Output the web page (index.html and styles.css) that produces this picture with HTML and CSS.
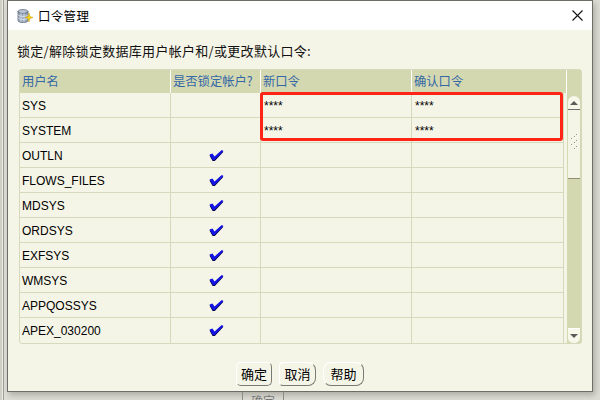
FILE: index.html
```html
<!DOCTYPE html>
<html lang="zh-CN">
<head>
<meta charset="utf-8">
<title>口令管理</title>
<link rel="stylesheet" href="styles.css">
</head>
<body>
<div class="screen">
  <div class="dialog">
    <div class="titlebar">
      <svg class="app-icon" width="16" height="16" viewBox="0 0 16 16">
        <ellipse cx="6" cy="3.5" rx="5" ry="2" fill="#b8c4d4" stroke="#6a7688" stroke-width="0.8"/>
        <path d="M1 3.5 V12.5 A5 2 0 0 0 11 12.5 V3.5 A5 2 0 0 1 1 3.5 Z" fill="#9aa8bc" stroke="#5c6678" stroke-width="0.8"/>
        <path d="M1 6.5 A5 2 0 0 0 11 6.5 M1 9.5 A5 2 0 0 0 11 9.5" fill="none" stroke="#dfe6ee" stroke-width="0.8"/>
        <path d="M4 4 V14 M7 4.5 V14.5" stroke="#dfe6ee" stroke-width="0.7"/>
        <path d="M12 5 L13 8.5 L16 9.5 L13 10.5 L12 14 L11 10.5 L8 9.5 L11 8.5 Z" fill="#f4d21a" stroke="#c89a00" stroke-width="0.5"/>
      </svg>
      <span class="title">口令管理</span>
      <svg class="close" width="11" height="11" viewBox="0 0 11 11">
        <path d="M0.5 0.5 L10.5 10.5 M10.5 0.5 L0.5 10.5" stroke="#111" stroke-width="1.1"/>
      </svg>
    </div>
    <div class="content">
      <div class="prompt">锁定/解除锁定数据库用户帐户和/或更改默认口令:</div>
      <div class="grid">
        <div class="hcell">用户名</div>
        <div class="hcell">是否锁定帐户?</div>
        <div class="hcell">新口令</div>
        <div class="hcell hlast">确认口令</div>
        <div class="hcell hscroll"></div>

        <div class="cell">SYS</div><div class="cell"></div><div class="cell pw">****</div><div class="cell c4 pw">****</div><div class="gap"></div>
        <div class="cell">SYSTEM</div><div class="cell"></div><div class="cell pw">****</div><div class="cell c4 pw">****</div><div class="gap"></div>
        <div class="cell">OUTLN</div><div class="cell chk"><svg class="tick" width="15" height="12" viewBox="0 0 15 12"><path d="M0.5 5.5 L3.5 4.5 L5.5 7.5 L12.5 0.8 L14.2 2 L5.8 11 L3.6 11 Z" fill="#00004a"/><path d="M0.5 4.5 L3.5 3.5 L5.5 6.5 L12.8 0 L14.5 1 L5.6 10 L3.8 10 Z" fill="#1414e6"/></svg></div><div class="cell"></div><div class="cell c4"></div><div class="gap"></div>
        <div class="cell">FLOWS_FILES</div><div class="cell chk"><svg class="tick" width="15" height="12" viewBox="0 0 15 12"><path d="M0.5 5.5 L3.5 4.5 L5.5 7.5 L12.5 0.8 L14.2 2 L5.8 11 L3.6 11 Z" fill="#00004a"/><path d="M0.5 4.5 L3.5 3.5 L5.5 6.5 L12.8 0 L14.5 1 L5.6 10 L3.8 10 Z" fill="#1414e6"/></svg></div><div class="cell"></div><div class="cell c4"></div><div class="gap"></div>
        <div class="cell">MDSYS</div><div class="cell chk"><svg class="tick" width="15" height="12" viewBox="0 0 15 12"><path d="M0.5 5.5 L3.5 4.5 L5.5 7.5 L12.5 0.8 L14.2 2 L5.8 11 L3.6 11 Z" fill="#00004a"/><path d="M0.5 4.5 L3.5 3.5 L5.5 6.5 L12.8 0 L14.5 1 L5.6 10 L3.8 10 Z" fill="#1414e6"/></svg></div><div class="cell"></div><div class="cell c4"></div><div class="gap"></div>
        <div class="cell">ORDSYS</div><div class="cell chk"><svg class="tick" width="15" height="12" viewBox="0 0 15 12"><path d="M0.5 5.5 L3.5 4.5 L5.5 7.5 L12.5 0.8 L14.2 2 L5.8 11 L3.6 11 Z" fill="#00004a"/><path d="M0.5 4.5 L3.5 3.5 L5.5 6.5 L12.8 0 L14.5 1 L5.6 10 L3.8 10 Z" fill="#1414e6"/></svg></div><div class="cell"></div><div class="cell c4"></div><div class="gap"></div>
        <div class="cell">EXFSYS</div><div class="cell chk"><svg class="tick" width="15" height="12" viewBox="0 0 15 12"><path d="M0.5 5.5 L3.5 4.5 L5.5 7.5 L12.5 0.8 L14.2 2 L5.8 11 L3.6 11 Z" fill="#00004a"/><path d="M0.5 4.5 L3.5 3.5 L5.5 6.5 L12.8 0 L14.5 1 L5.6 10 L3.8 10 Z" fill="#1414e6"/></svg></div><div class="cell"></div><div class="cell c4"></div><div class="gap"></div>
        <div class="cell">WMSYS</div><div class="cell chk"><svg class="tick" width="15" height="12" viewBox="0 0 15 12"><path d="M0.5 5.5 L3.5 4.5 L5.5 7.5 L12.5 0.8 L14.2 2 L5.8 11 L3.6 11 Z" fill="#00004a"/><path d="M0.5 4.5 L3.5 3.5 L5.5 6.5 L12.8 0 L14.5 1 L5.6 10 L3.8 10 Z" fill="#1414e6"/></svg></div><div class="cell"></div><div class="cell c4"></div><div class="gap"></div>
        <div class="cell">APPQOSSYS</div><div class="cell chk"><svg class="tick" width="15" height="12" viewBox="0 0 15 12"><path d="M0.5 5.5 L3.5 4.5 L5.5 7.5 L12.5 0.8 L14.2 2 L5.8 11 L3.6 11 Z" fill="#00004a"/><path d="M0.5 4.5 L3.5 3.5 L5.5 6.5 L12.8 0 L14.5 1 L5.6 10 L3.8 10 Z" fill="#1414e6"/></svg></div><div class="cell"></div><div class="cell c4"></div><div class="gap"></div>
        <div class="cell last">APEX_030200</div><div class="cell chk last"><svg class="tick" width="15" height="12" viewBox="0 0 15 12"><path d="M0.5 5.5 L3.5 4.5 L5.5 7.5 L12.5 0.8 L14.2 2 L5.8 11 L3.6 11 Z" fill="#00004a"/><path d="M0.5 4.5 L3.5 3.5 L5.5 6.5 L12.8 0 L14.5 1 L5.6 10 L3.8 10 Z" fill="#1414e6"/></svg></div><div class="cell last"></div><div class="cell c4 last"></div><div class="gap"></div>

        <div class="scrollbar">
          <div class="sb-up"><span class="tri-up"></span></div>
          <div class="sb-thumb">
            <svg class="grip" width="8" height="18" viewBox="0 0 8 18">
              <g fill="#9a9a80"><rect x="6" y="0" width="1" height="1"/><rect x="4" y="2" width="1" height="1"/><rect x="1" y="4" width="1" height="1"/><rect x="6" y="6" width="1" height="1"/><rect x="4" y="8" width="1" height="1"/><rect x="1" y="10" width="1" height="1"/><rect x="6" y="12" width="1" height="1"/><rect x="4" y="14" width="1" height="1"/></g>
              <g fill="#ffffff"><rect x="7" y="1" width="1" height="1"/><rect x="5" y="3" width="1" height="1"/><rect x="2" y="5" width="1" height="1"/><rect x="7" y="7" width="1" height="1"/><rect x="5" y="9" width="1" height="1"/><rect x="2" y="11" width="1" height="1"/><rect x="7" y="13" width="1" height="1"/><rect x="5" y="15" width="1" height="1"/></g>
            </svg>
          </div>
          <div class="sb-track"></div>
          <div class="sb-down"><span class="tri-down"></span></div>
        </div>

        <div class="highlight"></div>
      </div>
      <div class="buttons">
        <div class="btn b1">确定</div>
        <div class="btn b2">取消</div>
        <div class="btn b3">帮助</div>
      </div>
    </div>
  </div>
  <div class="behind">
    <div class="ghost-btn">确定</div>
  </div>
</div>
</body>
</html>
```
FILE: styles.css
```css
* { box-sizing: border-box; }
html, body { margin: 0; padding: 0; }
body {
  width: 600px;
  height: 400px;
  overflow: hidden;
  background: #dcdcd4;
  font-family: "Liberation Sans", "Noto Sans CJK SC", sans-serif;
}
.screen {
  width: 600px;
  height: 400px;
  background:
    linear-gradient(to right, #cfcfc6 0, #cfcfc6 2px, #ebebe4 2px, #ebebe4 3px, #9e9e98 3px, #9e9e98 4px, #deded6 4px, #deded6 7px, transparent 7px);
  display: flex;
  flex-direction: column;
}
.dialog {
  margin-left: 7px;
  width: 586px;
  height: 392px;
  border: 1px solid #6e6e68;
  background: #f5f5e7;
  box-shadow: 2px 3px 6px rgba(0,0,0,0.22);
  display: flex;
  flex-direction: column;
  flex: none;
}
.titlebar {
  height: 29px;
  background: #ffffff;
  display: flex;
  align-items: center;
  padding-left: 9px;
  padding-right: 9px;
  flex: none;
}
.app-icon { flex: none; margin-top: 1px; }
.title {
  margin-left: 5px;
  font-family: "Noto Sans CJK SC", sans-serif;
  font-size: 12.5px;
  color: #000;
  letter-spacing: 0.3px;
}
.close { margin-left: auto; margin-right: 0; }
.content {
  flex: 1;
  padding: 13px 0 0 9px;
  display: flex;
  flex-direction: column;
}
.prompt {
  height: 16px;
  line-height: 16px;
  font-family: "Noto Sans CJK SC", sans-serif;
  font-size: 13px;
  letter-spacing: 0.3px;
  color: #111;
}
.grid {
  position: relative;
  margin-top: 10px;
  margin-left: 2px;
  width: 563px;
  border: 1px solid #d6d9bb;
  border-radius: 3px;
  display: grid;
  grid-template-columns: 151px 90px 151px 152px 3px 14px;
  grid-template-rows: 23px repeat(10, 25px);
}
.hcell {
  background: #d3d8b1;
  border-right: 1px solid #ffffff;
  color: #3467a6;
  font-family: "Noto Sans CJK SC", sans-serif;
  font-size: 12.3px;
  line-height: 23px;
  padding-left: 2px;
  white-space: nowrap;
  overflow: hidden;
}
.hlast { grid-column: 4 / span 2; }
.hscroll { border-right: none; }
.cell {
  border-right: 1px solid #d6d9bb;
  border-bottom: 1px solid #d6d9bb;
  font-size: 12px;
  color: #000;
  padding-left: 2px;
  padding-top: 1px;
  line-height: 24px;
  white-space: nowrap;
}
.cell.last { border-bottom: none; }
.pw { padding-left: 3px; font-size: 12px; line-height: 26px; padding-top: 0; }
.chk {
  display: flex;
  align-items: center;
  justify-content: center;
  padding-left: 2px;
  padding-top: 1px;
}
.gap { background: #f5f5e7; }
.scrollbar {
  grid-column: 6;
  grid-row: 2 / span 10;
  background: #d3d8b1;
  padding: 3px 1px 0 1px;
  display: flex;
  flex-direction: column;
}
.sb-up {
  height: 14px;
  background: #f7f7ea;
  border-radius: 6px 6px 0 0;
  border-bottom: 1px solid #6e6e68;
  display: flex;
  justify-content: center;
  align-items: center;
}
.tri-up {
  width: 0; height: 0;
  border-left: 4px solid transparent;
  border-right: 4px solid transparent;
  border-bottom: 4px solid #5c5c58;
}
.sb-thumb {
  height: 69px;
  background: #f5f5e7;
  border-bottom: 1px solid #8f9070;
  display: flex;
  justify-content: center;
  padding-top: 24px;
}
.sb-track { flex: 1; }
.sb-down {
  height: 15px;
  background: #f7f7ea;
  border-top: 1px solid #ffffff;
  border-radius: 0 0 5px 5px;
  display: flex;
  justify-content: center;
  align-items: center;
  margin-bottom: 0;
}
.tri-down {
  width: 0; height: 0;
  border-left: 4px solid transparent;
  border-right: 4px solid transparent;
  border-top: 4px solid #5c5c58;
}
.highlight {
  position: absolute;
  left: 240px;
  top: 22px;
  width: 303px;
  height: 49px;
  border: 3px solid #ff2416;
  border-radius: 3px;
  pointer-events: none;
}
.buttons {
  margin-top: 18px;
  margin-left: -9px;
  display: flex;
  justify-content: center;
  gap: 7px;
}
.btn {
  height: 24px;
  line-height: 22px;
  padding: 0 6px;
  font-family: "Noto Sans CJK SC", sans-serif;
  font-size: 13px;
  color: #000;
  background: #f5f5e7;
  border: 1px solid;
  border-color: #ffffff #7a7a74 #7a7a74 #ffffff;
  border-radius: 5px;
}
.b1 { width: 36px; padding: 0; text-align: center; }
.b2 { width: 37px; padding: 0; text-align: center; border-radius: 4px 8px 8px 4px; }
.b3 { width: 41px; padding: 0; text-align: center; border-radius: 8px; }
.behind {
  flex: 1;
  overflow: hidden;
  padding-left: 242px;
}
.ghost-btn {
  width: 42px;
  height: 8px;
  border: 1px solid #8a8a84;
  border-top: none;
  border-bottom: none;
  text-align: center;
  font-family: "Noto Sans CJK SC", sans-serif;
  font-size: 12px;
  line-height: 16px;
  color: #777;
  overflow: hidden;
  padding-top: 1px;
}
```
